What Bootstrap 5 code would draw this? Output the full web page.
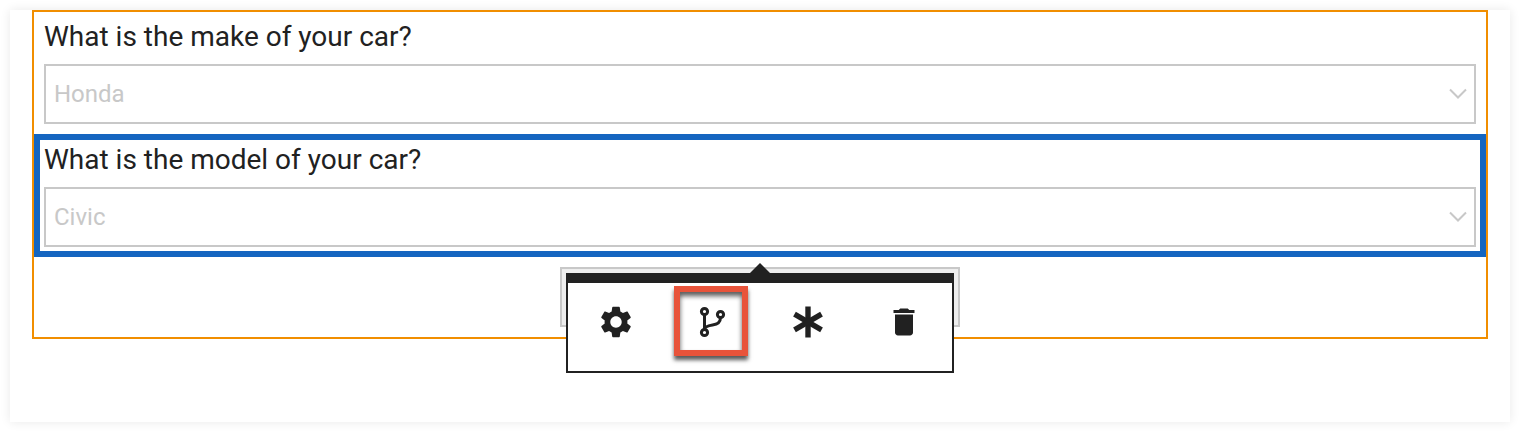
<!DOCTYPE html>
<html lang="en">
<head>
<meta charset="utf-8">
<title>Question editor</title>
<link href="https://cdn.jsdelivr.net/npm/bootstrap@5.3.0/dist/css/bootstrap.min.css" rel="stylesheet">
<style>
body{background:#fff;height:432px;overflow:hidden;font-family:Roboto,"Liberation Sans",sans-serif;color:#212121}
.sheet{margin:10px;height:412px;padding:0 22px;background:#fff;box-shadow:0 0 10px rgba(0,0,0,.09)}
.group-frame{border:2px solid #f18e00;height:329px}
.question{border:6px solid transparent;padding:0 4px 4px}
.question-first{border-top-width:5px}
.question-active{border-color:#1565c0}
.question-label{display:block;font-size:28px;line-height:39px;height:47px;margin:0;letter-spacing:0}
.answer.form-select,.answer.form-select:disabled{height:60px;border:2px solid #c8c8c8;border-radius:0;padding:0 40px 0 8px;font-size:24px;line-height:56px;color:#c8c8c8;background-color:#fff;background-image:url("data:image/svg+xml,%3Csvg xmlns='http://www.w3.org/2000/svg' width='18' height='12'%3E%3Cpath d='M1 1.500l8 8 8-8' fill='none' stroke='%23c8c8c8' stroke-width='2'/%3E%3C/svg%3E");background-position:right 7px center;background-size:18px 12px;background-repeat:no-repeat}
.add-slot{width:400px;height:60px;margin-top:10px;background:#eee;border:2px solid #c8c8c8}
.tool-pop{left:4px;top:4px;width:388px;height:100px;background:#fff;border:2px solid #212121;border-top-width:10px;z-index:2}
.tool-pop::before{content:"";position:absolute;left:182px;top:-20px;border:10px solid transparent;border-top:0;border-bottom-color:#212121}
.tool-cell{width:96px;height:70px;margin-top:3px}
.tool-tile{width:74px;height:70px;border:6px solid transparent;flex:none}
.tool-active{border-color:#e8533a;margin-right:2px;box-shadow:0 4px 4px rgba(0,0,0,.65),inset 0 4px 5px rgba(0,0,0,.65)}
.tool-icon{width:36px;height:36px;fill:#212121;margin-top:2px}
.tool-gear{width:38px;height:38px}
</style>
</head>
<body>
<div class="sheet">
  <div class="group-frame">
    <div class="question question-first">
      <label class="question-label" for="make">What is the make of your car?</label>
      <select class="form-select answer" id="make" disabled><option>Honda</option></select>
    </div>
    <div class="question question-active">
      <label class="question-label" for="model">What is the model of your car?</label>
      <select class="form-select answer" id="model" disabled><option>Civic</option></select>
    </div>
    <div class="add-slot mx-auto position-relative">
      <div class="tool-pop position-absolute d-flex">
        <div class="tool-cell d-flex align-items-center justify-content-center"><div class="tool-tile d-flex align-items-center justify-content-center">
          <svg class="tool-icon tool-gear" viewBox="0 0 24 24"><path d="M19.14 12.94c.04-.3.06-.61.06-.94 0-.32-.02-.64-.07-.94l2.03-1.58c.18-.14.23-.41.12-.61l-1.92-3.32c-.12-.22-.37-.29-.59-.22l-2.39.96c-.5-.38-1.03-.7-1.62-.94l-.36-2.54c-.04-.24-.24-.41-.48-.41h-3.84c-.24 0-.43.17-.47.41l-.36 2.54c-.59.24-1.13.57-1.62.94l-2.39-.96c-.22-.08-.47 0-.59.22L2.74 8.87c-.12.21-.08.47.12.61l2.03 1.58c-.05.3-.09.63-.09.94s.02.64.07.94l-2.03 1.58c-.18.14-.23.41-.12.61l1.92 3.32c.12.22.37.29.59.22l2.39-.96c.5.38 1.03.7 1.62.94l.36 2.54c.05.24.24.41.48.41h3.84c.24 0 .44-.17.47-.41l.36-2.54c.59-.24 1.13-.56 1.62-.94l2.39.96c.22.08.47 0 .59-.22l1.92-3.32c.12-.22.07-.47-.12-.61l-2.01-1.58zM12 15.600c-1.980 0-3.600-1.620-3.600-3.600s1.620-3.600 3.600-3.600 3.600 1.620 3.600 3.600-1.620 3.600-3.600 3.600z"/></svg>
        </div></div>
        <div class="tool-cell d-flex align-items-center justify-content-center"><div class="tool-tile tool-active d-flex align-items-center justify-content-center">
          <svg class="tool-icon" viewBox="0 0 36 36" fill="none"><g fill="none" stroke="#212121" stroke-width="3"><circle cx="11.500" cy="7.500" r="3.100"/><circle cx="11.500" cy="28.500" r="3.100"/><circle cx="27.500" cy="10.500" r="3.100"/><path d="M11.500 10.600v15"/><path d="M27.500 13.500c0 6-4 7-8 7.600-4 .6-8 1.400-8 4.400"/></g></svg>
        </div></div>
        <div class="tool-cell d-flex align-items-center justify-content-center"><div class="tool-tile d-flex align-items-center justify-content-center">
          <svg class="tool-icon" viewBox="0 0 36 36"><g stroke="#212121" stroke-width="5.400"><path d="M18 2.500v31"/><path d="M4.500 10.200l27 15.600"/><path d="M31.500 10.200l-27 15.600"/></g></svg>
        </div></div>
        <div class="tool-cell d-flex align-items-center justify-content-center"><div class="tool-tile d-flex align-items-center justify-content-center">
          <svg class="tool-icon" viewBox="0 0 24 24"><path d="M6 19c0 1.100.9 2 2 2h8c1.100 0 2-.9 2-2V7H6v12zM19 4h-3.500l-1-1h-5l-1 1H5v2h14V4z"/></svg>
        </div></div>
      </div>
    </div>
  </div>
</div>
<script src="https://cdn.jsdelivr.net/npm/bootstrap@5.3.0/dist/js/bootstrap.bundle.min.js"></script>
</body>
</html>
